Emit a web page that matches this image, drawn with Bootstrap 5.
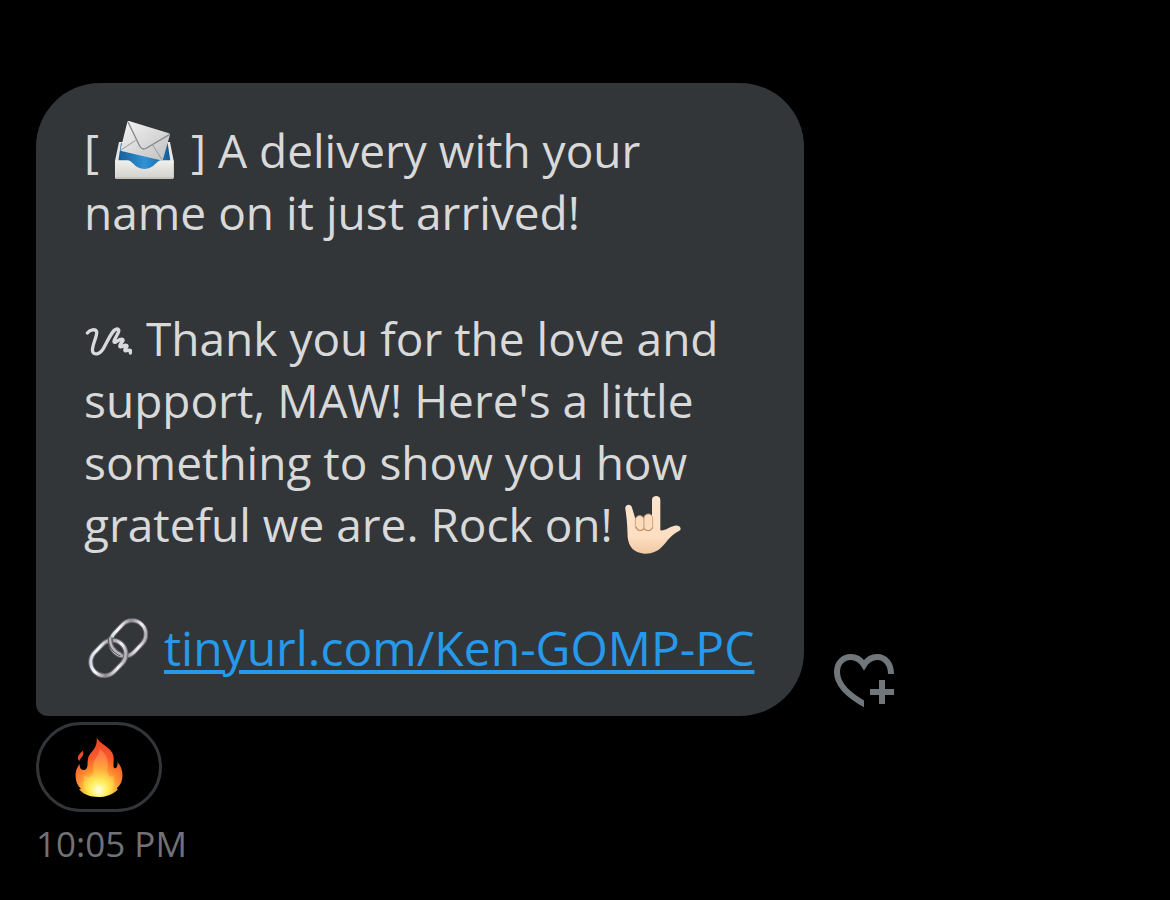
<!DOCTYPE html>
<html lang="en">
<head>
<meta charset="utf-8">
<meta name="viewport" content="width=device-width, initial-scale=1">
<title>Direct message</title>
<link href="https://cdn.jsdelivr.net/npm/bootstrap@5.3.0/dist/css/bootstrap.min.css" rel="stylesheet">
<style>
body{background:#000;color:#d9d9d9;font-family:"Open Sans","Noto Sans",sans-serif}
.chat{padding:83px 36px 32px}
.bubble{background:#323639;border-radius:64px 64px 64px 12px;padding:36px 46px 37px 48px;font-size:46px;line-height:62px;max-width:768px;flex:0 1 768px}
.bubble p{margin:0 0 64px}
.bubble p + p{margin-bottom:62px}
.bubble p:last-child{margin-bottom:0}
.bubble svg{width:60px;height:60px;vertical-align:-12px}
.bubble svg.squiggle{width:50px;height:34px;vertical-align:-2px}
.bubble a{color:#2799ea;font-size:48px;line-height:60px;text-decoration-thickness:4px;text-underline-offset:4px}
.like{color:#71767b;margin:0 0 8px 30px;line-height:0}
.like svg{width:60px;height:54px}
.reaction{width:126px;height:90px;border:3px solid #323639;border-radius:45px;background:#000;margin-top:6px}
.reaction svg{width:50px;height:60px}
.sent{color:#717275;font-size:35px;line-height:44px;margin-top:10px}
</style>
</head>
<body>
<main class="chat">
<div class="d-flex align-items-end">
<article class="bubble">
<p>[ <svg class="mx-1" viewBox="116 30 180 180" role="img" aria-label="Incoming envelope tray">
<defs>
<linearGradient id="tray" x1="0" y1="0" x2="0" y2="1"><stop offset="0" stop-color="#f1f0ed"/><stop offset="1" stop-color="#d2d0cb"/></linearGradient>
<linearGradient id="paper" x1="0" y1="0" x2="1" y2="1"><stop offset="0" stop-color="#f5f5f5"/><stop offset="1" stop-color="#bfbfc1"/></linearGradient>
<linearGradient id="inside" x1="0" y1="0" x2="1" y2="0"><stop offset="0" stop-color="#165e98"/><stop offset=".5" stop-color="#3092d4"/><stop offset="1" stop-color="#155b94"/></linearGradient>
</defs>
<path d="M128 96H281L292 152V202Q292 207 286 207H122Q116 207 116 202V152Z" fill="#e9e7e3"/>
<path d="M134 100H274L282 152L230 184H175L126 152Z" fill="url(#inside)"/>
<path d="M158 33L278 70Q282 72 280 77L260 148Q258 153 253 151L135 123Q131 121 133 116L153 36Q154 32 158 33Z" fill="url(#paper)"/>
<path d="M134 120L178 91M257 149L229 105" stroke="#98999c" stroke-width="3" fill="none"/>
<path d="M155 36L190 108Q198 122 211 114L279 74" stroke="#85878b" stroke-width="4" fill="none" stroke-linejoin="round"/>
<path d="M117 151H152C170 151 174 177 204 177S239 151 256 151H292V202Q292 207 286 207H122Q117 207 117 202Z" fill="url(#tray)"/>
<path d="M119 204H290" stroke="#b6b4af" stroke-width="3"/>
</svg> ] A delivery with your<br>name on it just arrived!</p>
<p><svg class="squiggle" viewBox="28 44 150 102" role="img" aria-label="Squiggle" fill="none" stroke="currentColor" stroke-width="10" stroke-linecap="round" stroke-linejoin="round"><path d="M38 71C46 61 62 57 66 67C69 80 49 112 54 127C59 138 75 135 84 121C98 99 112 60 127 59C142 61 121 82 118 96C118 107 132 87 143 90C152 93 131 105 136 112C142 116 149 104 156 108C161 113 147 118 151 124C156 126 163 120 167 123L167 131"/></svg> Thank you for the love and<br>support, MAW! Here's a little<br>something to show you how<br>grateful we are. Rock on! <svg viewBox="76 42 180 180" role="img" aria-label="Love-you gesture">
<defs><linearGradient id="skin" x1="0" y1="0" x2="0" y2="1"><stop offset="0" stop-color="#ffe5cc"/><stop offset=".7" stop-color="#fddfc2"/><stop offset="1" stop-color="#f0c8a2"/></linearGradient></defs>
<path d="M77 87C75 72 94 70 97 83L107 116L157 112V59C157 44 182 44 182 59V151C197 153 211 139 225 137C242 134 248 148 238 153C218 162 207 178 192 195C176 214 156 222 134 221C102 219 87 200 84 172C83 140 82 119 77 87Z" fill="url(#skin)"/>
<g fill="#fbdcbd" stroke="#d3a47c" stroke-width="3"><rect x="107" y="107" width="26" height="45" rx="13"/><rect x="133" y="102" width="26" height="50" rx="13"/></g>
<path d="M109 140Q117 159 133 147Q150 160 160 141" fill="none" stroke="#bd855b" stroke-width="3"/>
</svg></p>
<p class="text-nowrap"><svg class="mx-1" viewBox="33 36 180 180" role="img" aria-label="Link" fill="none">
<defs><linearGradient id="steel" x1="0" y1="0" x2="1" y2="1"><stop offset="0" stop-color="#9fb9ce"/><stop offset=".25" stop-color="#fff"/><stop offset=".5" stop-color="#8b868e"/><stop offset=".75" stop-color="#f4f4fa"/><stop offset="1" stop-color="#756f75"/></linearGradient></defs>
<g transform="rotate(-46 154 97)"><rect x="96" y="56" width="116" height="82" rx="41" stroke="#625c63" stroke-width="15"/><rect x="96" y="56" width="116" height="82" rx="41" stroke="url(#steel)" stroke-width="9"/></g>
<g transform="rotate(-46 94 156)"><rect x="36" y="115" width="116" height="82" rx="41" stroke="#6a666d" stroke-width="15"/><rect x="36" y="115" width="116" height="82" rx="41" stroke="url(#steel)" stroke-width="9"/></g>
<path d="M100 94C97 116 110 137 132 145" stroke="#5e5960" stroke-width="14"/><path d="M100 94C97 116 110 137 132 145" stroke="#b9b8bf" stroke-width="7"/>
</svg> <a href="https://tinyurl.com/Ken-GOMP-PC">tinyurl.com/Ken-GOMP-PC</a></p>
</article>
<button class="like btn p-0 border-0 flex-shrink-0" type="button" aria-label="Add reaction">
<svg viewBox="42 42 180 162" fill="none" stroke="currentColor" stroke-width="18"><defs><clipPath id="cut"><path d="M42 42H222V104H132V204H42Z"/></clipPath></defs><path clip-path="url(#cut)" d="M213 102C213 70 194 51 172 51C155 51 142 59 132 75C122 59 109 51 92 51C70 51 51 68 51 96C51 130 80 164 140 196"/><path d="M150 156H222M186 120V192"/></svg>
</button>
</div>
<button class="reaction d-flex align-items-center justify-content-center p-0" type="button" aria-label="Fire reaction">
<svg viewBox="142 141 150 180" aria-hidden="true">
<defs>
<radialGradient id="flame" gradientUnits="userSpaceOnUse" cx="216" cy="302" r="155"><stop offset="0" stop-color="#fff9b0"/><stop offset=".2" stop-color="#ffe044"/><stop offset=".42" stop-color="#ff8d2e"/><stop offset=".65" stop-color="#f95a2c"/><stop offset="1" stop-color="#ee4324"/></radialGradient>
<radialGradient id="core" gradientUnits="userSpaceOnUse" cx="216" cy="300" r="110"><stop offset="0" stop-color="#fffff0"/><stop offset=".25" stop-color="#fff05e"/><stop offset=".6" stop-color="#ffae3d"/><stop offset="1" stop-color="#ff8050"/></radialGradient>
</defs>
<path d="M210 142C216 160 246 169 257 189C266 207 257 225 262 234C271 238 274 227 272 216C286 230 290 250 286 269C283 282 277 287 271 294L273 299C257 314 238 321 215 321C190 321 171 314 157 298L163 297C151 286 145 269 147 249C148 237 154 229 159 221C158 233 163 240 172 240C187 238 180 219 185 202C190 186 214 176 210 142Z" fill="url(#flame)"/>
<path d="M169 182C174 198 162 201 158 213C148 205 156 191 169 182Z" fill="#e84d2b"/>
<path d="M219 177C218 198 202 204 200 224C198 241 205 254 190 260C181 264 175 257 170 254C177 273 164 280 175 297C186 312 203 318 217 318C240 317 258 305 262 287C264 277 257 269 264 256C250 267 240 253 243 235C246 211 239 190 219 177Z" fill="url(#core)" opacity=".8"/>
</svg>
</button>
<time class="sent d-block" datetime="22:05">10:05 PM</time>
</main>
<script src="https://cdn.jsdelivr.net/npm/bootstrap@5.3.0/dist/js/bootstrap.bundle.min.js"></script>
</body>
</html>
